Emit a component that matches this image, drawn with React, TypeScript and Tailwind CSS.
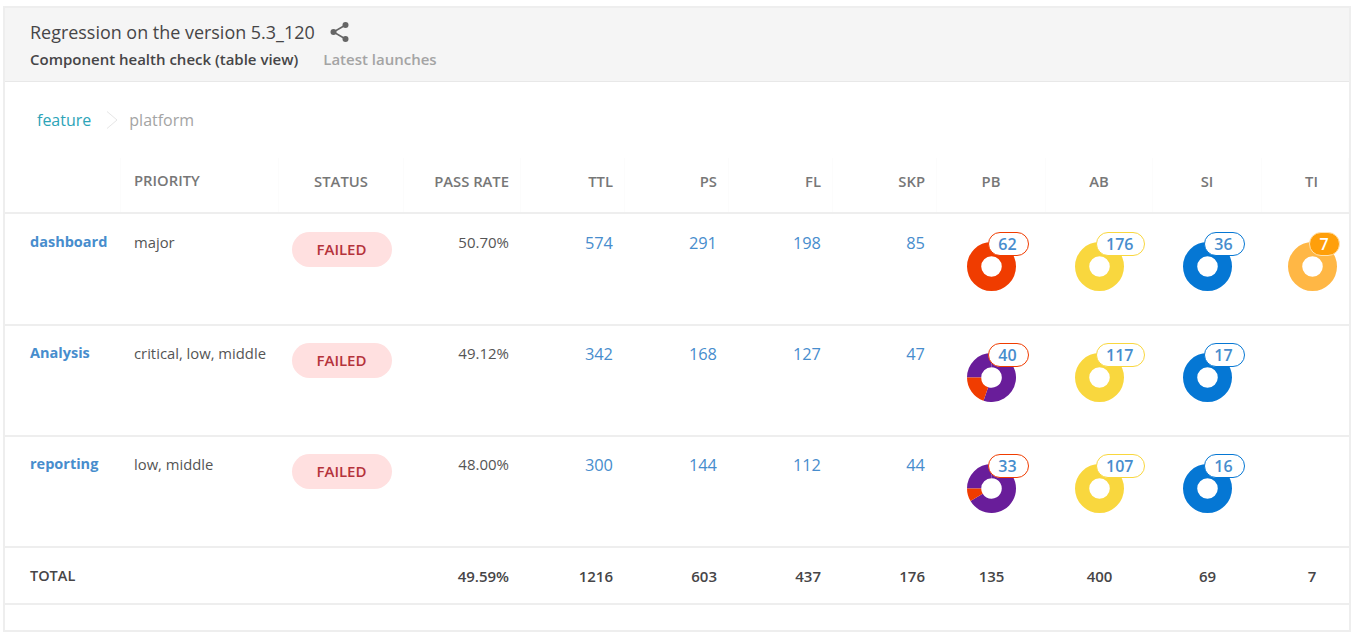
import React from "react";

const COLS = "grid-cols-[116px_158px_125px_117px_104px_104px_104px_104px_109px_107px_109px_87px]";

function polar(r: number, deg: number) {
  const a = ((deg - 90) * Math.PI) / 180;
  return [25 + r * Math.cos(a), 25 + r * Math.sin(a)];
}

function slice(from: number, to: number) {
  const R = 25;
  const r = 10.5;
  const large = to - from > 180 ? 1 : 0;
  const [x1, y1] = polar(R, from);
  const [x2, y2] = polar(R, to);
  const [x3, y3] = polar(r, to);
  const [x4, y4] = polar(r, from);
  return `M${x1} ${y1}A${R} ${R} 0 ${large} 1 ${x2} ${y2}L${x3} ${y3}A${r} ${r} 0 ${large} 0 ${x4} ${y4}Z`;
}

function Donut({ color, red }: { color: string; red?: number }) {
  return (
    <svg width="49" height="49" viewBox="0 0 50 50" className="block">
      {red === undefined ? (
        <path fillRule="evenodd" fill={color} d="M25 0a25 25 0 1 0 0 50a25 25 0 1 0 0-50ZM25 14.5a10.5 10.5 0 1 1 0 21a10.5 10.5 0 1 1 0-21Z" />
      ) : (
        <>
          <path fill={color} d={slice(270, 360)} />
          <path fill={color} d={slice(0, red)} />
          <path fill="#f03c00" d={slice(red, 270)} />
        </>
      )}
    </svg>
  );
}

function Chart({ value, color, border, red, solid }: { value: number; color: string; border: string; red?: number; solid?: boolean }) {
  return (
    <div className="relative w-[49px] h-[49px] mt-[27px]">
      <Donut color={color} red={red} />
      <span
        className={`absolute top-[-10px] left-[21px] h-[24px] rounded-[12px] border flex items-center justify-center text-[16px] font-semibold leading-none ${solid ? "w-[31px] text-white" : "min-w-[41px] pl-[9px] pr-[11px] text-[#478dcd] bg-white"}`}
        style={{ borderColor: border, backgroundColor: solid ? "#ff9f0a" : undefined }}
      >
        {value}
      </span>
    </div>
  );
}

const rows = [
  { name: "dashboard", pr: "major", rate: "50.70%", ttl: 574, ps: 291, fl: 198, skp: 85, pb: 62, ab: 176, si: 36, ti: 7, red: undefined as number | undefined, pbColor: "#f03c00" },
  { name: "Analysis", pr: "critical, low, middle", rate: "49.12%", ttl: 342, ps: 168, fl: 127, skp: 47, pb: 40, ab: 117, si: 17, ti: 0, red: 199, pbColor: "#691d9a" },
  { name: "reporting", pr: "low, middle", rate: "48.00%", ttl: 300, ps: 144, fl: 112, skp: 44, pb: 33, ab: 107, si: 16, ti: 0, red: 239, pbColor: "#691d9a" },
];

function Num({ v }: { v: number }) {
  return <div className="pt-[16px] pr-[12px] text-right text-[16.4px] leading-[24px] text-[#478dcd]">{v}</div>;
}

function Head({ children, className }: { children?: React.ReactNode; className: string }) {
  return <div className={`text-[14.8px] leading-[20px] text-[#777777] font-semibold border-r border-[#fcfcfc] ${className}`}>{children}</div>;
}

export default function App() {
  return (
    <div className="bg-white w-[1355px] h-[637px] overflow-hidden pt-[6px] pl-[3px] pr-[4px] text-[#464547]" style={{ fontFamily: '"Open Sans", sans-serif' }}>
      <div className="h-[626px] border-2 border-[#eeeeee]">
        <header className="h-[74px] bg-[#f5f5f5] border-b border-[#e8e8e8] pl-[25px] pt-[10px]">
          <div className="flex items-center h-[28px]">
            <h1 className="text-[17.95px] font-normal leading-[28px]">Regression on the version 5.3_120</h1>
            <svg width="20" height="22" viewBox="0 0 20 22" className="ml-[15px]" fill="#666666" stroke="none">
              <circle cx="15.5" cy="4" r="3" />
              <circle cx="3.5" cy="11" r="3" />
              <circle cx="15.5" cy="18" r="3" />
              <path d="M15.5 4 3.5 11 15.5 18" fill="none" stroke="#666666" strokeWidth="1.6" />
            </svg>
          </div>
          <div className="flex h-[20px] items-center text-[15px] font-semibold mt-[3px]">
            <span>Component health check (table view)</span>
            <span className="ml-[25px] text-[#a4a4a4]">Latest launches</span>
          </div>
        </header>

        <div className="h-[76px] flex items-center pl-[32px] text-[16px]">
          <span className="text-[#2ca4b8]">feature</span>
          <svg width="12" height="20" viewBox="0 0 12 20" className="ml-[15px] mr-[11px]" fill="none" stroke="#e6e6e6">
            <path d="M1 1.5 11 10 1 18.5" />
          </svg>
          <span className="text-[#a4a4a4]">platform</span>
        </div>

        <div className={`grid ${COLS} h-[56px] border-b-2 border-[#eeeeee] w-[1344px]`}>
          <Head className="" />
          <Head className="pl-[13px] pt-[12px]">PRIORITY</Head>
          <Head className="text-center pt-[13px]">STATUS</Head>
          <Head className="text-right pr-[11px] pt-[13px]">PASS RATE</Head>
          <Head className="text-right pr-[11px] pt-[13px]">TTL</Head>
          <Head className="text-right pr-[11px] pt-[13px]">PS</Head>
          <Head className="text-right pr-[11px] pt-[13px]">FL</Head>
          <Head className="text-right pr-[11px] pt-[13px]">SKP</Head>
          <Head className="text-center pt-[13px]">PB</Head>
          <Head className="text-center pt-[13px]">AB</Head>
          <Head className="text-center pt-[13px]">SI</Head>
          <Head className="text-center pt-[13px] pl-[13px]">TI</Head>
        </div>

        {rows.map((r, i) => (
          <div key={r.name} className={`grid ${COLS} border-b-2 border-[#eeeeee] ${i === 0 ? "h-[112px] pt-[1px]" : "h-[111px]"}`}>
            <div className="pl-[25px] pt-[17px] text-[14.5px] leading-[20px] font-bold text-[#478dcd]">{r.name}</div>
            <div className="pl-[13px] pt-[17px] text-[14.8px] leading-[20px] text-[#555555]">{r.pr}</div>
            <div className="flex justify-center pt-[17px]">
              <span className="w-[100px] h-[35px] rounded-full bg-[#ffe0e0] text-[#b5333b] text-[15px] font-semibold flex items-center justify-center">FAILED</span>
            </div>
            <div className="pt-[17px] pr-[12px] text-right text-[15px] leading-[20px] text-[#555555]">{r.rate}</div>
            <Num v={r.ttl} />
            <Num v={r.ps} />
            <Num v={r.fl} />
            <Num v={r.skp} />
            <div className="flex justify-center"><Chart value={r.pb} color={r.pbColor} border="#f03c00" red={r.red} /></div>
            <div className="flex justify-center"><Chart value={r.ab} color="#f9d73e" border="#f9d73e" /></div>
            <div className="flex justify-center"><Chart value={r.si} color="#0577d4" border="#0577d4" /></div>
            <div className="flex justify-center pl-[13px]">
              {r.ti ? <Chart value={r.ti} color="#ffb745" border="#ffe2b0" solid /> : null}
            </div>
          </div>
        ))}

        <div className={`grid ${COLS} h-[57px] border-b-2 border-[#eeeeee] items-center pt-[1px] text-[15px] font-semibold`}>
          <div className="pl-[25px] text-[14.5px]">TOTAL</div>
          <div />
          <div />
          <div className="text-right pr-[12px]">49.59%</div>
          <div className="text-right pr-[12px]">1216</div>
          <div className="text-right pr-[12px]">603</div>
          <div className="text-right pr-[12px]">437</div>
          <div className="text-right pr-[12px]">176</div>
          <div className="text-center">135</div>
          <div className="text-center">400</div>
          <div className="text-center">69</div>
          <div className="text-center pl-[13px]">7</div>
        </div>
      </div>
    </div>
  );
}
